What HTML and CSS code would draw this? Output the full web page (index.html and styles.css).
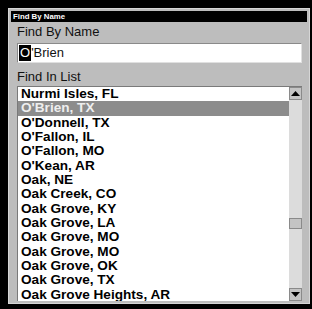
FILE: index.html
```html
<!DOCTYPE html>
<html lang="en">

<head>
  <meta charset="UTF-8">
  <meta name="viewport" content="width=device-width, initial-scale=1.0">
  <title>Find By Name</title>
  <link rel="stylesheet" href="styles.css">
</head>

<body>
  <div class="window">
    <div class="title-bar">Find By Name</div>
    <div class="content">
      <div class="label">Find By Name</div>
      <div class="name-input"><span class="cursor">O</span>'Brien</div>
      <div class="label list-label">Find In List</div>
      <div class="list-box">
        <ul class="list">
          <li>Nurmi Isles, FL</li>
          <li class="selected">O'Brien, TX</li>
          <li>O'Donnell, TX</li>
          <li>O'Fallon, IL</li>
          <li>O'Fallon, MO</li>
          <li>O'Kean, AR</li>
          <li>Oak, NE</li>
          <li>Oak Creek, CO</li>
          <li>Oak Grove, KY</li>
          <li>Oak Grove, LA</li>
          <li>Oak Grove, MO</li>
          <li>Oak Grove, MO</li>
          <li>Oak Grove, OK</li>
          <li>Oak Grove, TX</li>
          <li>Oak Grove Heights, AR</li>
        </ul>
        <div class="scrollbar">
          <div class="scroll-btn">
            <svg width="9" height="5" viewBox="0 0 9 5"><path d="M4.5 0 L9 5 L0 5 Z" fill="#000"/></svg>
          </div>
          <div class="scroll-track">
            <div class="scroll-thumb"></div>
          </div>
          <div class="scroll-btn">
            <svg width="9" height="5" viewBox="0 0 9 5"><path d="M0 0 L9 0 L4.5 5 Z" fill="#000"/></svg>
          </div>
        </div>
      </div>
    </div>
  </div>
</body>

</html>
```

FILE: styles.css
```css
body {
  margin: 0;
  background-color: #000;
  width: 312px;
  height: 309px;
  overflow: hidden;
  font-family: 'Liberation Sans', Arial, sans-serif;
}

.window {
  margin: 8px 2px 0 8px;
  height: 290px;
  background-color: #bdbdbd;
  border: 1px solid #d6d6d6;
  padding: 2px;
}

.title-bar {
  height: 11px;
  background-color: #000;
  color: #fff;
  font-size: 7.8px;
  font-weight: bold;
  line-height: 11px;
  padding-left: 2px;
}

.content {
  padding: 0 5px 0 6px;
}

.label {
  margin-top: 2px;
  font-size: 13px;
  line-height: 16px;
  color: #111;
}

.list-label {
  margin-top: 6px;
}

.name-input {
  margin-top: 3px;
  height: 18px;
  background-color: #fff;
  border-top: 1px solid #8a8a8a;
  border-left: 1px solid #8a8a8a;
  border-bottom: 1px solid #e0e0e0;
  border-right: 1px solid #e0e0e0;
  font-size: 13px;
  line-height: 18px;
  color: #111;
  padding-left: 1px;
}

.cursor {
  display: inline-block;
  background-color: #000;
  color: #fff;
  line-height: 16px;
  padding: 0 1px;
}

.list-box {
  margin-top: 1px;
  height: 214px;
  display: flex;
  background-color: #fff;
  border-top: 1px solid #7a7a7a;
  border-left: 1px solid #7a7a7a;
  overflow: hidden;
}

.list {
  flex: 1;
  list-style: none;
  margin: 0;
  padding: 0;
}

.list li {
  height: 14.33px;
  line-height: 14.33px;
  padding-left: 3px;
  font-size: 13.6px;
  font-weight: bold;
  color: #000;
  white-space: nowrap;
}

.list li.selected {
  background-color: #8c8c8c;
  color: #eeeeee;
}

.scrollbar {
  width: 13px;
  display: flex;
  flex-direction: column;
  background-color: #dcdcdc;
}

.scroll-btn {
  height: 13px;
  display: flex;
  align-items: center;
  justify-content: center;
  background-color: #c4c4c4;
  border: 1px solid #8a8a8a;
  box-sizing: border-box;
}

.scroll-track {
  flex: 1;
  padding-top: 118px;
}

.scroll-thumb {
  height: 11px;
  background-color: #c4c4c4;
  border: 1px solid #8a8a8a;
  box-sizing: border-box;
}
```
